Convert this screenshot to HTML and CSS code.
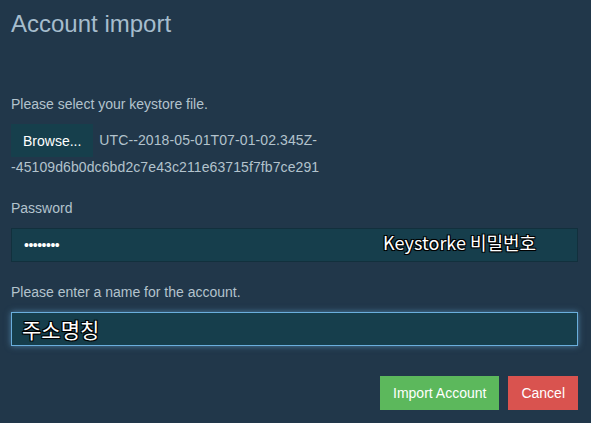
FILE: index.html
```html
<!DOCTYPE html>
<html lang="en">
<head>
    <meta charset="UTF-8">
    <title>Account import</title>
    <link rel="stylesheet" href="styles.css">
</head>
<body>
    <div class="dialog">
        <h1 class="title">Account import</h1>

        <div class="field field-file">
            <label>Please select your keystore file.</label>
            <div class="file-row">
                <button class="btn-browse">Browse...</button>
                <span class="file-name">UTC--2018-05-01T07-01-02.345Z-</span>
            </div>
            <div class="file-name file-rest">-45109d6b0dc6bd2c7e43c211e63715f7fb7ce291</div>
        </div>

        <div class="field">
            <label>Password</label>
            <div class="input-wrap">
                <input type="password" class="input" value="12345678">
                <span class="note note-password">Keystorke 비밀번호</span>
            </div>
        </div>

        <div class="field">
            <label>Please enter a name for the account.</label>
            <div class="input input-focus"><span class="note">주소명칭</span></div>
        </div>

        <div class="actions">
            <button class="btn btn-success">Import Account</button>
            <button class="btn btn-danger">Cancel</button>
        </div>
    </div>
</body>
</html>
```

FILE: styles.css
```css
body {
    margin: 0;
    background: #21374a;
    font-family: "Liberation Sans", Arial, sans-serif;
    color: #b3c3cd;
}
.dialog {
    padding: 10px 13px 0 11px;
}
.title {
    margin: 0;
    font-size: 24px;
    font-weight: normal;
    line-height: 28px;
    color: #a6bdcd;
}
.field {
    margin-top: 21px;
}
.field-file {
    margin-top: 57px;
}
.field label {
    display: block;
    font-size: 14px;
    line-height: 18px;
    margin-bottom: 11px;
}
.file-row {
    display: flex;
    align-items: center;
    gap: 6px;
}
.file-name {
    font-size: 14px;
    line-height: 27px;
    letter-spacing: 0.1px;
}
.file-rest {
    margin: -3px 0 -3px;
}
.btn-browse {
    height: 33px;
    padding: 0 12px;
    background: #163f4c;
    border: none;
    color: #fff;
    font-family: inherit;
    font-size: 14px;
}
.input-wrap {
    position: relative;
}
.input {
    display: block;
    box-sizing: border-box;
    width: 100%;
    height: 34px;
    margin: 0;
    padding: 0 12px;
    background: #163e4c;
    border: 1px solid #12303d;
    color: #fff;
    font-size: 14px;
    letter-spacing: -0.5px;
    outline: none;
}
.input-focus {
    border-color: #6aaedc;
    box-shadow: 0 0 6px rgba(106, 174, 220, 0.6);
    padding: 0 10px;
    display: flex;
    align-items: center;
}
.note {
    font-family: "Noto Sans CJK KR", sans-serif;
    font-size: 21px;
    color: #fff;
    letter-spacing: 0;
    text-shadow: -1px -1px 0 #000, 1px -1px 0 #000, -1px 1px 0 #000, 1px 1px 0 #000, 0 0 2px #000;
}
.note-password {
    position: absolute;
    left: 372px;
    top: 1px;
    font-size: 18px;
}
.actions {
    display: flex;
    justify-content: flex-end;
    gap: 9px;
    margin-top: 30px;
}
.btn {
    height: 34px;
    padding: 0 13px;
    border: none;
    color: #fff;
    font-family: inherit;
    font-size: 14px;
}
.btn-success {
    background: #5cb85c;
}
.btn-danger {
    background: #d9534f;
}
```
